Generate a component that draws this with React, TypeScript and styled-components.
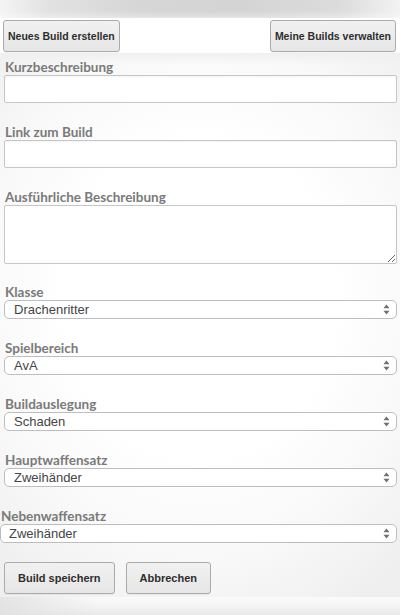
import React, { ReactElement } from 'react';
import styled, { createGlobalStyle } from 'styled-components';

const GlobalStyle = createGlobalStyle`
  html, body {
    margin: 0;
    padding: 0;
    background: #fff;
  }
`;

interface SelectField {
  label: string;
  value: string;
  flush?: boolean;
}

const selectFields: SelectField[] = [
  { label: 'Klasse', value: 'Drachenritter' },
  { label: 'Spielbereich', value: 'AvA' },
  { label: 'Buildauslegung', value: 'Schaden' },
  { label: 'Hauptwaffensatz', value: 'Zweihänder' },
  { label: 'Nebenwaffensatz', value: 'Zweihänder', flush: true },
];

const SelectArrows = (): ReactElement => (
  <ArrowIcon width='7' height='11' viewBox='0 0 7 11'>
    <path d='M3.5 0.5 L6.5 4.3 L0.5 4.3 Z' fill='#6e6e6e' />
    <path d='M3.5 10.5 L6.5 6.7 L0.5 6.7 Z' fill='#6e6e6e' />
  </ArrowIcon>
);

export default function App(): ReactElement {
  return (
    <>
      <GlobalStyle />
      <Page>
        <TopStrip />
        <Toolbar>
          <Button>Neues Build erstellen</Button>
          <Button>Meine Builds verwalten</Button>
        </Toolbar>

        <FormPanel>
          <Field>
            <Label>Kurzbeschreibung</Label>
            <TextInput type='text' />
          </Field>

          <Field>
            <Label>Link zum Build</Label>
            <TextInput type='text' />
          </Field>

          <Field $gap={20}>
            <Label>Ausführliche Beschreibung</Label>
            <TextArea />
          </Field>

          {selectFields.map((field) => (
            <Field key={field.label} $flush={field.flush}>
              <Label>{field.label}</Label>
              <SelectWrap>
                <Select defaultValue={field.value} $flush={field.flush}>
                  <option>{field.value}</option>
                </Select>
                <SelectArrows />
              </SelectWrap>
            </Field>
          ))}

          <Actions>
            <Button $wide>Build speichern</Button>
            <Button $wide>Abbrechen</Button>
          </Actions>
        </FormPanel>
        <BottomStrip />
      </Page>
    </>
  );
}

const Page = styled.div`
  width: 400px;
  height: 615px;
  display: flex;
  flex-direction: column;
  overflow: hidden;
  font-family: 'Liberation Sans', Arial, sans-serif;
`;

const TopStrip = styled.div`
  height: 18px;
  flex: none;
  background:
    linear-gradient(to bottom, rgba(255, 255, 255, 0) 60%, rgba(255, 255, 255, 0.35) 100%),
    linear-gradient(
      to right,
      #f4f4f4 0%,
      #e2e2e2 12%,
      #d6d6d6 35%,
      #d4d4d4 60%,
      #dcdcdc 85%,
      #f2f2f2 100%
    );
`;

const Toolbar = styled.div`
  height: 35px;
  flex: none;
  display: flex;
  justify-content: space-between;
  align-items: flex-start;
  padding: 2px 4px 0 3px;
  box-sizing: border-box;
  background: #fff;
`;

const Button = styled.button<{ $wide?: boolean }>`
  height: 32px;
  padding: ${(props) => (props.$wide ? '0 13px' : '0 4px')};
  border: 1px solid #ababab;
  border-radius: 3px;
  background: linear-gradient(to bottom, #f1f1f1, #e6e6e6);
  box-shadow: 0 1px 0 rgba(0, 0, 0, 0.04);
  font-family: 'Liberation Sans', Arial, sans-serif;
  font-size: ${(props) => (props.$wide ? 11 : 10.5)}px;
  font-weight: 700;
  color: #2e2e2e;
  cursor: pointer;
`;

const FormPanel = styled.div`
  flex: 1;
  padding: 6px 3px 0 4px;
  box-sizing: border-box;
  background:
    linear-gradient(to bottom, #f0f0f0 0px, rgba(255, 255, 255, 0) 12px),
    radial-gradient(ellipse 75% 65% at 50% 45%, #ffffff 45%, #f8f8f8 75%, #efefef 100%);
`;

const Field = styled.div<{ $gap?: number; $flush?: boolean }>`
  display: flex;
  flex-direction: column;
  margin-bottom: ${(props) => props.$gap ?? 21}px;
  margin-left: ${(props) => (props.$flush ? '-4px' : '0')};
`;

const Label = styled.label`
  display: block;
  height: 16px;
  padding-left: 1px;
  font-family: Lato, 'Liberation Sans', sans-serif;
  font-size: 13.5px;
  font-weight: 700;
  line-height: 16px;
  color: #7a7a7a;
`;

const TextInput = styled.input`
  height: 28px;
  box-sizing: border-box;
  width: 100%;
  margin: 0;
  border: 1px solid #c6c6c6;
  border-radius: 2px;
  background: #fff;
  box-shadow: inset 0 1px 1px rgba(0, 0, 0, 0.04);
  outline: none;
`;

const TextArea = styled.textarea`
  height: 59px;
  box-sizing: border-box;
  width: 100%;
  margin: 0;
  border: 1px solid #c6c6c6;
  border-radius: 2px;
  background: #fff;
  outline: none;
  resize: both;
`;

const SelectWrap = styled.div`
  position: relative;
  width: 100%;
`;

const Select = styled.select<{ $flush?: boolean }>`
  appearance: none;
  -webkit-appearance: none;
  width: 100%;
  height: 19px;
  box-sizing: border-box;
  margin: 0;
  padding: 0 20px 0 ${(props) => (props.$flush ? 8 : 9)}px;
  border: 1px solid #bdbdbd;
  border-radius: 5px;
  background: #fff;
  font-family: 'Liberation Sans', Arial, sans-serif;
  font-size: 13px;
  line-height: 17px;
  color: #454545;
  outline: none;
`;

const ArrowIcon = styled.svg`
  position: absolute;
  right: 7px;
  top: 4px;
  pointer-events: none;
`;

const Actions = styled.div`
  display: flex;
  gap: 11px;
  margin-top: -2px;
`;

const BottomStrip = styled.div`
  height: 18px;
  flex: none;
  background:
    linear-gradient(to right, rgba(225, 225, 225, 0.9) 0%, rgba(255, 255, 255, 0) 25%),
    linear-gradient(to bottom, #fbfbfb 0%, #f2f2f2 60%, #e9e9e9 100%);
`;
